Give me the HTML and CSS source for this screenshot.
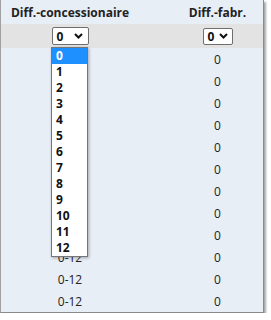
FILE: index.html
```html
<!DOCTYPE html>
<html lang="fr">
<head>
    <meta charset="UTF-8">
    <meta name="viewport" content="width=device-width, initial-scale=1.0">
    <title>Diff.</title>
    <link rel="stylesheet" href="styles.css">
</head>
<body>
    <div class="panel">
        <div class="row head">
            <div class="cell">Diff.-concessionaire</div>
            <div class="cell right">Diff.-fabr.</div>
        </div>
        <div class="row filters">
            <div class="cell">
                <div class="select wide">
                    <span>0</span>
                    <svg width="9" height="6" viewBox="0 0 9 6"><polyline points="1,1 4.5,4.5 8,1" fill="none" stroke="#111" stroke-width="2"/></svg>
                </div>
            </div>
            <div class="cell right">
                <div class="select">
                    <span>0</span>
                    <svg width="9" height="6" viewBox="0 0 9 6"><polyline points="1,1 4.5,4.5 8,1" fill="none" stroke="#111" stroke-width="2"/></svg>
                </div>
            </div>
        </div>
        <div class="rows">
            <div class="row"><div class="cell">0-12</div><div class="cell right">0</div></div>
            <div class="row"><div class="cell">0-12</div><div class="cell right">0</div></div>
            <div class="row"><div class="cell">0-12</div><div class="cell right">0</div></div>
            <div class="row"><div class="cell">0-12</div><div class="cell right">0</div></div>
            <div class="row"><div class="cell">0-12</div><div class="cell right">0</div></div>
            <div class="row"><div class="cell">0-12</div><div class="cell right">0</div></div>
            <div class="row"><div class="cell">0-12</div><div class="cell right">0</div></div>
            <div class="row"><div class="cell">0-12</div><div class="cell right">0</div></div>
            <div class="row"><div class="cell">0-12</div><div class="cell right">0</div></div>
            <div class="row"><div class="cell">0-12</div><div class="cell right">0</div></div>
            <div class="row"><div class="cell">0-12</div><div class="cell right">0</div></div>
            <div class="row"><div class="cell">0-12</div><div class="cell right">0</div></div>
        </div>
        <ul class="options">
            <li class="active">0</li>
            <li>1</li>
            <li>2</li>
            <li>3</li>
            <li>4</li>
            <li>5</li>
            <li>6</li>
            <li>7</li>
            <li>8</li>
            <li>9</li>
            <li>10</li>
            <li>11</li>
            <li>12</li>
        </ul>
    </div>
</body>
</html>
```

FILE: styles.css
```css
body {
    margin: 0;
    background: white;
    font-family: "Open Sans", Arial, sans-serif;
    color: #222;
}
.panel {
    position: relative;
    width: 262px;
    background: #e8eef6;
    border-left: 1px solid #a0a0a0;
    border-right: 1px solid #8a8a8a;
    border-bottom: 1px solid #8a8a8a;
    box-shadow: 2px 2px 2px rgba(0, 0, 0, 0.35);
}
.row {
    display: grid;
    grid-template-columns: 138px 124px;
    align-items: center;
    height: 22px;
    font-size: 12px;
}
.cell {
    display: flex;
    justify-content: center;
}
.cell.right {
    padding-left: 33px;
}
.head {
    height: 24px;
    font-weight: bold;
    font-size: 12px;
}
.filters {
    height: 24px;
    background: #e3e3e3;
}
.select {
    display: flex;
    align-items: center;
    justify-content: space-between;
    box-sizing: border-box;
    width: 30px;
    height: 17px;
    padding: 0 4px 0 4px;
    background: white;
    border: 1px solid #6e6e6e;
    border-radius: 2px;
    font-weight: bold;
    font-size: 12px;
    color: #111;
}
.select.wide {
    width: 37px;
    height: 18px;
    padding-right: 5px;
}
.options {
    position: absolute;
    left: 50px;
    top: 47px;
    width: 35px;
    margin: 0;
    padding: 0;
    list-style: none;
    background: white;
    border: 1px solid #767676;
    box-shadow: 1px 1px 3px rgba(0, 0, 0, 0.3);
    font-weight: bold;
    font-size: 12px;
    color: #111;
}
.options li {
    height: 16px;
    line-height: 16px;
    padding-left: 4px;
}
.options li.active {
    background: #1e90ff;
    color: white;
}
```
